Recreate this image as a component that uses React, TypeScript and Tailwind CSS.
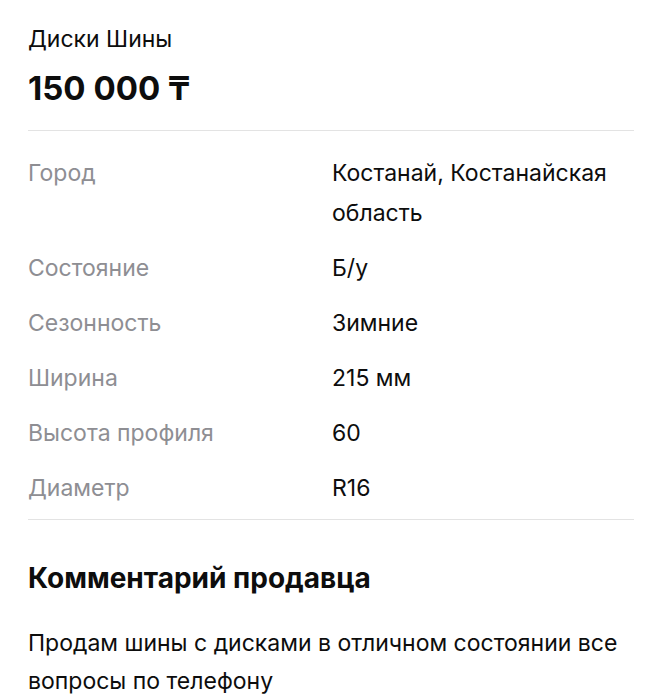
const specs = [
  { label: "Город", value: "Костанай, Костанайская область" },
  { label: "Состояние", value: "Б/у" },
  { label: "Сезонность", value: "Зимние" },
  { label: "Ширина", value: "215 мм" },
  { label: "Высота профиля", value: "60" },
  { label: "Диаметр", value: "R16" },
];

export default function App() {
  return (
    <div className="min-h-[700px] bg-white px-[28px] pt-[25px] text-[#0d0d0d] [font-family:Inter,'Noto_Sans',sans-serif]">
      <h1 className="text-[23px] leading-[28px] font-normal">Диски Шины</h1>
      <p className="mt-[15px] text-[33px] leading-[40px] font-bold">150 000 ₸</p>

      <div className="mt-[22px] h-px bg-[#e3e3e3]" />

      <div className="flex flex-col gap-[15px] pt-[22px] pb-[11px]">
        {specs.map((s) => (
          <div key={s.label} className="grid grid-cols-[304px_1fr] text-[23px] leading-[40px]">
            <span className="text-[#8e8e93]">{s.label}</span>
            <span>{s.value}</span>
          </div>
        ))}
      </div>

      <div className="h-px bg-[#e3e3e3]" />

      <h2 className="mt-[41px] text-[28px] leading-[34px] font-bold">Комментарий продавца</h2>
      <p className="mt-[29px] text-[23px] leading-[38px]">
        Продам шины с дисками в отличном состоянии все вопросы по телефону
      </p>
    </div>
  );
}
